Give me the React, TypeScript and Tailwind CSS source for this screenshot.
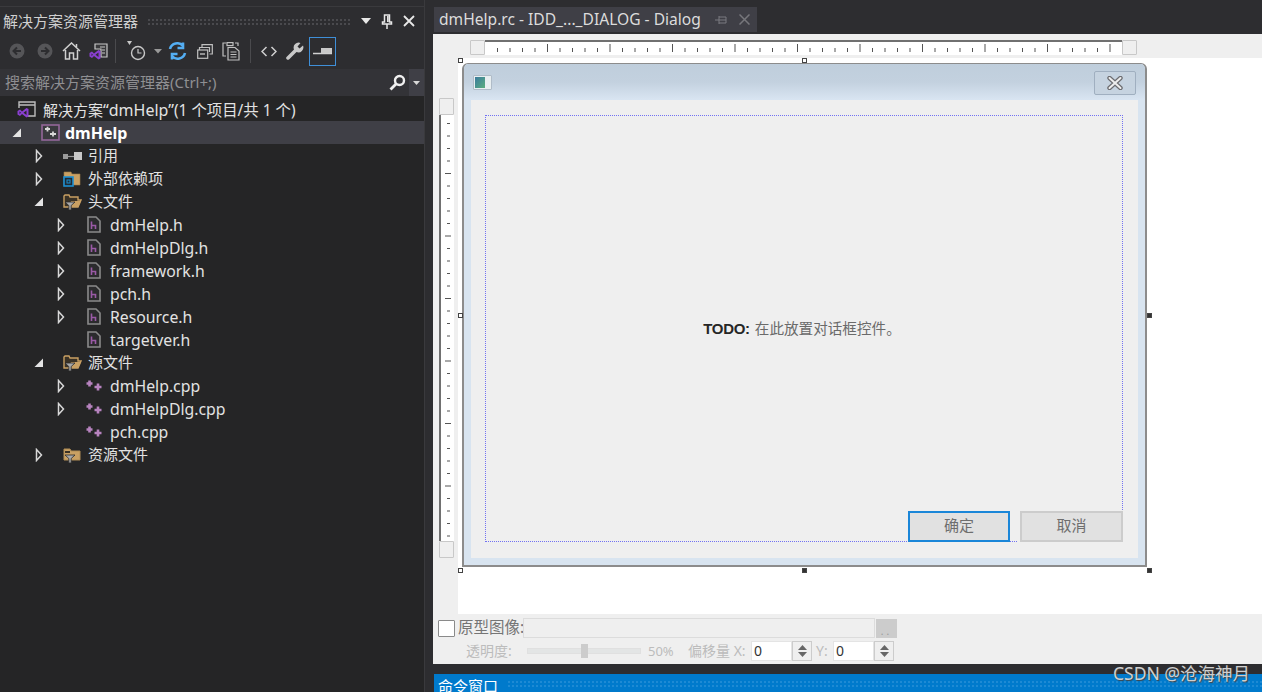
import React from 'react';

type TreeItem = {
    level: number;
    arrow?: 'open' | 'closed';
    icon: 'project' | 'ref' | 'deps' | 'filter' | 'filterClosed' | 'h' | 'cpp';
    text: string;
    latin?: boolean;
};

const treeItems: TreeItem[] = [
    { level: 2, arrow: 'closed', icon: 'ref', text: '引用' },
    { level: 2, arrow: 'closed', icon: 'deps', text: '外部依赖项' },
    { level: 2, arrow: 'open', icon: 'filter', text: '头文件' },
    { level: 3, arrow: 'closed', icon: 'h', text: 'dmHelp.h', latin: true },
    { level: 3, arrow: 'closed', icon: 'h', text: 'dmHelpDlg.h', latin: true },
    { level: 3, arrow: 'closed', icon: 'h', text: 'framework.h', latin: true },
    { level: 3, arrow: 'closed', icon: 'h', text: 'pch.h', latin: true },
    { level: 3, arrow: 'closed', icon: 'h', text: 'Resource.h', latin: true },
    { level: 3, icon: 'h', text: 'targetver.h', latin: true },
    { level: 2, arrow: 'open', icon: 'filter', text: '源文件' },
    { level: 3, arrow: 'closed', icon: 'cpp', text: 'dmHelp.cpp', latin: true },
    { level: 3, arrow: 'closed', icon: 'cpp', text: 'dmHelpDlg.cpp', latin: true },
    { level: 3, icon: 'cpp', text: 'pch.cpp', latin: true },
    { level: 2, arrow: 'closed', icon: 'filterClosed', text: '资源文件' },
];

const Arrow = ({ kind }: { kind?: 'open' | 'closed' }) => {
    if (kind === 'closed') {
        return (
            <svg width="12" height="14" viewBox="0 0 12 14">
                <path d="M3.5 1.5 L8.5 7 L3.5 12.5 Z" fill="none" stroke="#d8d8d8" strokeWidth="1.5" />
            </svg>
        );
    }
    if (kind === 'open') {
        return (
            <svg width="12" height="14" viewBox="0 0 12 14">
                <path d="M1.5 11 L10 11 L10 2.5 Z" fill="#e4e4e4" />
            </svg>
        );
    }
    return null;
};

const Funnel = () => <path d="M2 10 H12 L8.2 13.5 V18 H5.8 V13.5 Z" fill="#a8a8a8" stroke="#2a2a2a" strokeWidth="0.8" />;

const TreeIcon = ({ icon }: { icon: TreeItem['icon'] }) => {
    switch (icon) {
        case 'project':
            return (
                <svg width="19" height="17" viewBox="0 0 19 17">
                    <rect x="1" y="1" width="17" height="15" fill="#3a3a3f" stroke="#94679a" strokeWidth="1.6" />
                    <path d="M4 5 H9 M6.5 2.8 V7.4 M9 10 H15 M12 7.6 V12.6" stroke="#d8d8d8" strokeWidth="1.8" />
                </svg>
            );
        case 'ref':
            return (
                <svg width="19" height="10" viewBox="0 0 19 10">
                    <rect x="0" y="3" width="5" height="5" fill="#9a9a9a" />
                    <path d="M5 5.5 H11" stroke="#9a9a9a" strokeWidth="1.2" />
                    <rect x="11" y="1" width="8" height="8" fill="#c8c8c8" />
                </svg>
            );
        case 'deps':
            return (
                <svg width="18" height="16" viewBox="0 0 18 16">
                    <path d="M1 1 H8 L9 3 H17 V14 H1 Z" fill="#c9a063" stroke="#9a7a46" strokeWidth="0.6" />
                    <rect x="1" y="6" width="9" height="9" fill="#1f2a33" stroke="#1d8fd1" strokeWidth="1.6" />
                    <rect x="4" y="9" width="3" height="3" fill="none" stroke="#1d8fd1" strokeWidth="1" />
                </svg>
            );
        case 'filter':
            return (
                <svg width="19" height="19" viewBox="0 0 19 19">
                    <path d="M1 4 V15 H15 L18 8 H15 V5 H7 L6 3 H2 Z" fill="#3a3226" stroke="#c9a063" strokeWidth="1.4" />
                    <path d="M5 15 L8 9 H18 L15 15 Z" fill="#c9a063" />
                    <Funnel />
                </svg>
            );
        case 'filterClosed':
            return (
                <svg width="18" height="19" viewBox="0 0 18 19">
                    <path d="M1 4 V15 H17 V6 H8 L7 4 Z" fill="#c9a063" stroke="#b08c54" strokeWidth="1" />
                    <path d="M2 6 H7 V8 H2 Z" fill="#3a3226" />
                    <Funnel />
                </svg>
            );
        case 'h':
            return (
                <svg width="14" height="17" viewBox="0 0 14 17">
                    <path d="M1 1 H9 L13 5 V16 H1 Z" fill="#2b2b2d" stroke="#8a8a8a" strokeWidth="1.6" />
                    <path d="M4.5 5.5 V13 M4.5 9.5 H8.5 V13" fill="none" stroke="#9a5aa6" strokeWidth="1.6" />
                </svg>
            );
        case 'cpp':
            return (
                <svg width="16" height="11" viewBox="0 0 16 11">
                    <path d="M0.5 3.5 H6.5 M3.5 0.5 V6.5 M8.5 7 H15.5 M12 3.5 V10.5" stroke="#b783bf" strokeWidth="2.6" />
                </svg>
            );
    }
};

const VsBadge = () => (
    <path d="M0.5 10 L3 8.5 L5 10.5 L9.5 7 L11.5 8 V15.5 L9.5 16.5 L5 13 L3 15 L0.5 13.5 Z M2.5 10.5 V13 L4 11.8 Z M9.5 9.5 L6.5 11.8 L9.5 14 Z" fill="#8a3fd1" fillRule="evenodd" />
);

const ToolbarIcons = () => (
    <div className="flex items-center h-[32px] pl-[3px]">
        <div className="w-[28px] flex justify-center">
            <svg width="16" height="16" viewBox="0 0 16 16">
                <circle cx="8" cy="8" r="7.5" fill="#555558" />
                <path d="M12 8 H5 M8 4.5 L4.5 8 L8 11.5" fill="none" stroke="#2d2d30" strokeWidth="2" />
            </svg>
        </div>
        <div className="w-[28px] flex justify-center">
            <svg width="16" height="16" viewBox="0 0 16 16">
                <circle cx="8" cy="8" r="7.5" fill="#555558" />
                <path d="M4 8 H11 M8 4.5 L11.5 8 L8 11.5" fill="none" stroke="#2d2d30" strokeWidth="2" />
            </svg>
        </div>
        <div className="w-[24px] flex justify-center">
            <svg width="19" height="18" viewBox="0 0 19 18">
                <path d="M1 9 L9.5 1 L18 9 M3.5 8 V17 H7.5 V11 H11.5 V17 H15.5 V8 M14.5 2 V5" fill="none" stroke="#d0d0d0" strokeWidth="1.5" />
            </svg>
        </div>
        <div className="w-[30px] flex justify-center">
            <svg width="19" height="17" viewBox="0 0 19 17">
                <path d="M6 1 H18 V14 H12 V6 H6 Z" fill="#3a3a3d" stroke="#c8c8c8" strokeWidth="1.2" />
                <path d="M11 4 H16 M13 7 H16 M13 10 H16" stroke="#c8c8c8" strokeWidth="1" />
                <VsBadge />
            </svg>
        </div>
        <div className="w-px h-[24px] bg-[#4a4a4d] ml-[2px] mr-[11px]" />
        <div className="flex items-center w-[28px] justify-start">
            <svg width="21" height="20" viewBox="0 0 21 20">
                <path d="M0 0 H5 L2.5 4 Z" fill="#c8c8c8" />
                <circle cx="11" cy="12" r="6.5" fill="none" stroke="#c8c8c8" strokeWidth="1.4" />
                <path d="M11 8 V12 H14.5" fill="none" stroke="#c8c8c8" strokeWidth="1.2" />
            </svg>
        </div>
        <svg width="8" height="5" viewBox="0 0 8 5" className="ml-[-1px]">
            <path d="M0 0 H8 L4 4.5 Z" fill="#999999" />
        </svg>
        <div className="w-[28px] ml-[1px] flex justify-center">
            <svg width="19" height="18" viewBox="0 0 19 18">
                <path d="M2 7 A7.5 7.5 0 0 1 15 4 M15 0.5 V6 H9.5" fill="none" stroke="#54aef3" strokeWidth="2.6" />
                <path d="M17 11 A7.5 7.5 0 0 1 4 14 M4 17.5 V12 H9.5" fill="none" stroke="#54aef3" strokeWidth="2.6" />
            </svg>
        </div>
        <div className="w-[28px] flex justify-center">
            <svg width="16" height="15" viewBox="0 0 16 15">
                <path d="M5 3 V0.7 H15.3 V10 H12.5 M2.5 6 V3.5 H12.5 V8" fill="none" stroke="#c0c0c0" strokeWidth="1.2" />
                <rect x="0.7" y="6" width="10" height="8.3" fill="#2d2d30" stroke="#c0c0c0" strokeWidth="1.2" />
                <path d="M3 10 H8" stroke="#c0c0c0" strokeWidth="1.4" />
            </svg>
        </div>
        <div className="w-[24px] flex justify-center">
            <svg width="18" height="19" viewBox="0 0 18 19">
                <path d="M4 14 H1 V1 H4 M13 1 H16 V4" fill="none" stroke="#c0c0c0" strokeWidth="1.2" />
                <rect x="5" y="0.6" width="6" height="3" fill="none" stroke="#c0c0c0" strokeWidth="1.2" />
                <path d="M6 5.5 H13 L17 9 V18 H6 Z" fill="#2d2d30" stroke="#c0c0c0" strokeWidth="1.2" />
                <path d="M8.5 10 H14.5 M8.5 12.5 H14.5 M8.5 15 H14.5" stroke="#c0c0c0" strokeWidth="1" />
            </svg>
        </div>
        <div className="w-px h-[24px] bg-[#4a4a4d] ml-[7px] mr-[8px]" />
        <div className="w-[20px] flex justify-center">
            <svg width="16" height="11" viewBox="0 0 16 11">
                <path d="M5.5 1 L1 5.5 L5.5 10 M10.5 1 L15 5.5 L10.5 10" fill="none" stroke="#d0d0d0" strokeWidth="1.5" />
            </svg>
        </div>
        <div className="w-[30px] flex justify-center">
            <svg width="19" height="19" viewBox="0 0 19 19">
                <path d="M1.5 15 L9 7.5 A5 5 0 0 1 15.5 1 L12.5 4.5 L14.5 6.5 L18 3.5 A5 5 0 0 1 11.5 10 L4 17.5 A1.8 1.8 0 0 1 1.5 15 Z" fill="#c8c8c8" />
            </svg>
        </div>
        <div className="w-[27px] h-[29px] border border-[#3f8fd8] flex items-center justify-center">
            <svg width="19" height="8" viewBox="0 0 19 8">
                <path d="M0 6.5 H19" stroke="#d0d0d0" strokeWidth="1.5" />
                <rect x="8" y="1" width="11" height="5" fill="#c8c8c8" />
            </svg>
        </div>
    </div>
);

const Explorer = () => (
    <aside className="w-[425px] h-full shrink-0 flex flex-col bg-[#2d2d30] border-r border-[#3a3a3d]">
        <div className="h-[7px] border-b border-[#3a3a3d]" />
        <div className="h-[28px] flex items-center pl-[3px] pr-[9px] text-[15px] text-[#d0d0d0]">
            <span className="leading-none">解决方案资源管理器</span>
            <div className="flex-1 h-[7px] ml-[9px] mr-[9px] bg-[radial-gradient(#4a4a4e_1px,transparent_1px)] bg-[length:4px_4px]" />
            <svg width="12" height="7" viewBox="0 0 12 7" className="mr-[9px]">
                <path d="M1 0 H11 L6 6 Z" fill="#e8e8e8" />
            </svg>
            <svg width="12" height="15" viewBox="0 0 12 15" className="mr-[10px]">
                <path d="M3.5 1 H8.5 V8 H10.5 V10 H1.5 V8 H3.5 Z M6 10 V15 M6.8 2 V8" fill="none" stroke="#e8e8e8" strokeWidth="1.5" />
            </svg>
            <svg width="12" height="12" viewBox="0 0 12 12">
                <path d="M1 1 L11 11 M11 1 L1 11" stroke="#e8e8e8" strokeWidth="1.8" />
            </svg>
        </div>
        <ToolbarIcons />
        <div className="h-[27px] mt-[2px] flex items-center bg-[#333337] text-[15px] text-[#8f8f92]">
            <span className="pl-[5px] flex-1 leading-none">搜索解决方案资源管理器(Ctrl+;)</span>
            <svg width="17" height="17" viewBox="0 0 17 17" className="mr-[3px]">
                <circle cx="10.5" cy="6.5" r="4.5" fill="none" stroke="#f0f0f0" strokeWidth="2.4" />
                <path d="M7 10 L1.5 15.5" stroke="#f0f0f0" strokeWidth="2.8" />
            </svg>
            <div className="w-[15px] h-full bg-[#3f3f46] flex items-center justify-center">
                <svg width="7" height="4" viewBox="0 0 7 4">
                    <path d="M0 0 H7 L3.5 4 Z" fill="#d8d8d8" />
                </svg>
            </div>
        </div>
        <div className="flex-1 bg-[#252526] pt-[2px] text-[#e2e2e2]">
            <div className="h-[23px] flex items-center pl-[17px]">
                <svg width="19" height="17" viewBox="0 0 19 17" className="mr-[7px]">
                    <path d="M2 7 V1 H18 V15 H11 M2 4 H18" fill="none" stroke="#bdbdbd" strokeWidth="1.4" />
                    <VsBadge />
                </svg>
                <span className="text-[15px] leading-none whitespace-nowrap mt-[1px]">
                    解决方案<span className="text-[16px]">“dmHelp”</span><span className="text-[15.4px]">(1 个项目/共 1 个)</span>
                </span>
            </div>
            <div className="h-[23px] flex items-center bg-[#3f3f46] pl-[11px]">
                <div className="w-[12px] flex justify-center">
                    <Arrow kind="open" />
                </div>
                <div className="w-[20px] ml-[17px] flex justify-center">
                    <TreeIcon icon="project" />
                </div>
                <span className="ml-[5px] text-[16px] font-bold text-white leading-none">dmHelp</span>
            </div>
            {treeItems.map((item) => (
                <div
                    key={item.text}
                    className="h-[23px] flex items-center"
                    style={{ paddingLeft: 11 + (item.level - 1) * 22 }}
                >
                    <div className="w-[12px] flex justify-center">
                        <Arrow kind={item.arrow} />
                    </div>
                    <div className="w-[20px] ml-[17px] flex justify-center">
                        <TreeIcon icon={item.icon} />
                    </div>
                    <span className={`ml-[6px] leading-none ${item.latin ? 'text-[15.8px] mt-[2px]' : 'text-[15px]'}`}>{item.text}</span>
                </div>
            ))}
        </div>
    </aside>
);

const HorizontalRuler = () => (
    <div className="absolute left-[37px] top-[6px] w-[667px] h-[15px] flex">
        <div className="w-[15px] h-full bg-[#efefef] border border-[#c8c8c8] rounded-[1px]" />
        <div className="flex-1 h-full bg-white border-t-2 border-[#707070] overflow-hidden">
            <svg width="637" height="12" viewBox="0 0 637 12">
                {Array.from({ length: 52 }, (_, i) => (
                    <rect key={i} x={i * 12.5 + 12} y={i % 5 === 4 ? 2 : 6} width="1" height={i % 5 === 4 ? 8 : 4} fill="#555555" />
                ))}
            </svg>
        </div>
        <div className="w-[15px] h-full bg-[#efefef] border border-[#c8c8c8] rounded-[1px]" />
    </div>
);

const VerticalRuler = () => (
    <div className="absolute left-[6px] top-[64px] w-[15px] h-[460px] flex flex-col">
        <div className="h-[17px] w-full bg-[#efefef] border border-[#c8c8c8] rounded-[1px]" />
        <div className="flex-1 w-full bg-white border-l-2 border-[#707070] overflow-hidden">
            <svg width="13" height="426" viewBox="0 0 13 426">
                {Array.from({ length: 34 }, (_, i) => (
                    <rect key={i} x={i % 5 === 4 ? 4 : 6} y={i * 12.5 + 8} width={i % 5 === 4 ? 6 : 3} height="1" fill="#555555" />
                ))}
            </svg>
        </div>
        <div className="h-[17px] w-full bg-[#efefef] border border-[#c8c8c8] rounded-[1px]" />
    </div>
);

const Handle = ({ className, solid }: { className: string; solid?: boolean }) => (
    <div className={`absolute w-[5px] h-[5px] border border-[#444444] ${solid ? 'bg-[#333333]' : 'bg-white'} ${className}`} />
);

const DialogWindow = () => (
    <div className="absolute left-[29px] top-[29px] w-[685px] h-[504px] flex flex-col border-2 border-t border-[#8c8c8c] rounded-t-[6px] bg-[#d8e4f0]">
        <div className="h-[36px] shrink-0 flex items-center justify-between pl-[9px] pr-[9px] rounded-t-[5px] bg-gradient-to-b from-[#bfcedc] via-[#c3d1df] to-[#d9e5f2]">
            <div className="w-[19px] h-[15px] border border-[#b0bcc8] bg-[#e8eef0] flex rounded-[1px] p-px">
                <div className="w-[10px] h-full bg-gradient-to-br from-[#3c7a9c] to-[#5cae7c]" />
            </div>
            <div className="w-[42px] h-[24px] mt-[1px] border border-[#a0afc0] rounded-[2px] bg-[#c6d3e0] flex items-center justify-center">
                <svg width="16" height="14" viewBox="0 0 16 14">
                    <path d="M2.5 2 L13.5 12 M13.5 2 L2.5 12" stroke="#6c6c70" strokeWidth="4.4" strokeLinecap="round" />
                    <path d="M2.5 2 L13.5 12 M13.5 2 L2.5 12" stroke="#eeeeee" strokeWidth="2" strokeLinecap="round" />
                </svg>
            </div>
        </div>
        <div className="flex-1 mx-[7px] mb-[7px] bg-[#efefef] pl-[14px] pr-[15px] pt-[15px] pb-[16px] flex">
            <div className="relative flex-1 border border-dotted border-[#7272f2]">
                <div className="absolute inset-0 flex items-center justify-center pr-[4px] pb-[1px]">
                    <span className="font-['Liberation_Sans',sans-serif] text-[15px] font-bold text-[#262626] tracking-[-0.3px] mr-[5px] leading-none">TODO:</span>
                    <span className="text-[14.6px] text-[#6a6a6a] leading-none">在此放置对话框控件。</span>
                </div>
                <div className="absolute right-[-1px] bottom-[-1px] flex">
                    <div className="w-[102px] h-[31px] pb-[2px] border-2 border-[#1a86d8] bg-[#e1e1e1] flex items-center justify-center text-[15px] text-[#6e6e6e]">确定</div>
                    <div className="w-[8px]" />
                    <div className="w-[2px] bg-[#efefef]" />
                    <div className="w-[103px] h-[31px] pb-[2px] border-2 border-[#cccccc] bg-[#e1e1e1] flex items-center justify-center text-[15px] text-[#6e6e6e]">取消</div>
                </div>
            </div>
        </div>
    </div>
);

const Spinner = () => (
    <div className="w-[20px] h-[20px] border border-[#cccccc] flex flex-col items-center justify-center gap-[2px] bg-[#efefef]">
        <svg width="9" height="5" viewBox="0 0 9 5">
            <path d="M0 5 H9 L4.5 0 Z" fill="#666666" />
        </svg>
        <svg width="9" height="5" viewBox="0 0 9 5">
            <path d="M0 0 H9 L4.5 5 Z" fill="#666666" />
        </svg>
    </div>
);

const PrototypeBar = () => (
    <div className="h-[50px] shrink-0 flex flex-col bg-[#efefef] pl-[5px]">
        <div className="h-[26px] flex items-center pt-[2px]">
            <div className="w-[17px] h-[17px] border border-[#8a8a8a] bg-white rounded-[1px]" />
            <span className="ml-[3px] w-[65px] text-[15.5px] text-[#757575] leading-none whitespace-nowrap">原型图像:</span>
            <div className="w-[352px] h-[20px] bg-[#efefef] border border-[#dcdcdc]" />
            <div className="w-[21px] h-[19px] ml-[1px] bg-[#cccccc] flex items-end justify-center text-[10px] tracking-[3px] text-[#999999] leading-[14px]">..</div>
        </div>
        <div className="h-[22px] flex items-center text-[14px] text-[#bcbcbc]">
            <span className="ml-[28px] w-[61px] leading-none whitespace-nowrap">透明度:</span>
            <div className="relative w-[114px] h-[6px] bg-[#e3e5e5] border border-[#e0e0e0]">
                <div className="absolute left-[53px] top-[-5px] w-[7px] h-[14px] bg-[#cccccc]" />
            </div>
            <span className="ml-[7px] w-[40px] text-[13px] leading-none">50%</span>
            <span className="w-[63px] leading-none whitespace-nowrap">偏移量 X:</span>
            <div className="w-[41px] h-[20px] bg-white border border-[#e4e4e4] pl-[2px] text-[14px] text-[#333333] leading-[18px]">0</div>
            <Spinner />
            <span className="w-[21px] pl-[4px] leading-none">Y:</span>
            <div className="w-[41px] h-[20px] bg-white border border-[#e4e4e4] pl-[2px] text-[14px] text-[#333333] leading-[18px]">0</div>
            <Spinner />
        </div>
    </div>
);

const DialogEditor = () => (
    <div className="flex-1 min-w-0 flex flex-col">
        <div className="h-[7px]" />
        <div className="h-[25px] flex">
            <div className="w-[323px] ml-px flex items-center bg-[#3f3f46] pl-[5px] text-[#dcdcdc]">
                <span className="text-[15.6px] leading-none whitespace-nowrap">dmHelp.rc - IDD_..._DIALOG - Dialog</span>
                <svg width="12" height="10" viewBox="0 0 12 10" className="ml-[14px]">
                    <path d="M0 5 H4 M4 1 V9 M4 2 H11 V8 H4 M4 5 H11" fill="none" stroke="#7a7a80" strokeWidth="1" />
                </svg>
                <svg width="11" height="11" viewBox="0 0 11 11" className="ml-[12px]">
                    <path d="M0.5 0.5 L10.5 10.5 M10.5 0.5 L0.5 10.5" stroke="#77777c" strokeWidth="1.5" />
                </svg>
            </div>
        </div>
        <div className="h-[2px]" />
        <div className="relative flex-1 bg-[#efefef] overflow-hidden">
            <div className="absolute left-[25px] top-[24px] right-0 bottom-0 bg-white" />
            <HorizontalRuler />
            <VerticalRuler />
            <DialogWindow />
            <Handle className="left-[25px] top-[24px]" />
            <Handle className="left-[369px] top-[24px]" />
            <Handle className="left-[25px] top-[279px]" />
            <Handle solid className="left-[714px] top-[279px]" />
            <Handle className="left-[25px] top-[534px]" />
            <Handle solid className="left-[369px] top-[534px]" />
            <Handle solid className="left-[714px] top-[534px]" />
        </div>
        <PrototypeBar />
        <div className="h-[10px]" />
        <div className="h-[18px] ml-px flex items-center bg-[#007acc] pl-[4px] text-white overflow-hidden">
            <span className="text-[15px] leading-none mt-[6px]">命令窗口</span>
            <div className="flex-1 h-[8px] ml-[9px] mt-[2px] bg-[radial-gradient(#1e8ad4_1px,transparent_1px)] bg-[length:4px_4px]" />
        </div>
    </div>
);

export default function App() {
    return (
        <div className="relative w-[1262px] h-[692px] flex overflow-hidden bg-[#2d2d30] font-['Noto_Sans','Noto_Sans_CJK_SC',sans-serif]">
            <Explorer />
            <div className="w-[8px] shrink-0" />
            <DialogEditor />
            <div className="absolute right-[12px] bottom-[10px] text-[17.5px] text-[#cfcfcf] leading-none [text-shadow:1px_1px_1px_#444444]">CSDN @沧海神月</div>
        </div>
    );
}
